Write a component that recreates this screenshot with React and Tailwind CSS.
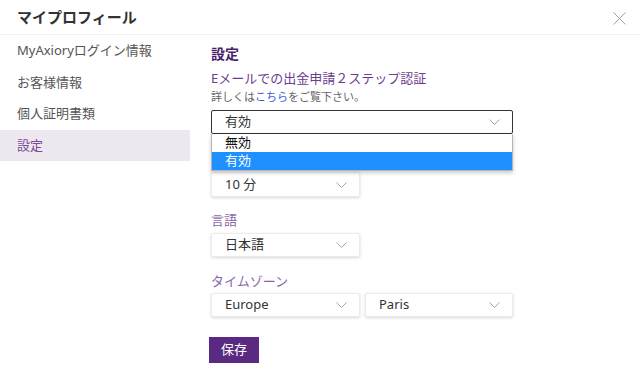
import React from 'react';

function Chevron() {
  return (
    <svg width="11" height="6" viewBox="0 0 11 6" fill="none" className="shrink-0">
      <path d="M0.5 0.5 L5.5 5.5 L10.5 0.5" stroke="#a3a3a3" strokeWidth="1" />
    </svg>
  );
}

function Select({ value, className = '' }) {
  return (
    <div className={`h-[24px] flex items-center justify-between pl-[13px] pr-[12px] bg-white border border-[#ececec] rounded-[2px] shadow-[0_1px_3px_rgba(0,0,0,0.16)] text-[13px] text-[#333] ${className}`}>
      <span>{value}</span>
      <Chevron />
    </div>
  );
}

export default function App() {
  const nav = ['MyAxioryログイン情報', 'お客様情報', '個人証明書類', '設定'];

  return (
    <div className="w-[640px] h-[373px] bg-white overflow-hidden font-['Noto_Sans','Noto_Sans_CJK_JP',sans-serif]">
      {/* Header */}
      <div className="h-[35px] flex items-center justify-between pl-[17px] pr-[14px] border-b border-[#f1f1f1]">
        <h1 className="text-[15px] font-bold text-[#333] leading-none">マイプロフィール</h1>
        <svg width="13" height="13" viewBox="0 0 13 13" className="mt-[3px]">
          <path d="M0.5 0.5 L12.5 12.5 M12.5 0.5 L0.5 12.5" stroke="#a0a0a0" strokeWidth="1" />
        </svg>
      </div>

      <div className="flex">
        {/* Sidebar */}
        <aside className="w-[190px] shrink-0">
          {nav.map((item) => (
            <div
              key={item}
              className={`h-[31.5px] flex items-center pl-[17px] text-[13px] ${item === '設定' ? 'bg-[#ede7f0] text-[#7a4b96]' : 'text-[#555]'}`}
            >
              {item}
            </div>
          ))}
        </aside>

        {/* Main */}
        <main className="flex-1 pl-[21px] pt-[9px]">
          <h2 className="text-[14px] leading-[20px] font-bold text-[#4a1d6b]">設定</h2>
          <div className="mt-[5px] text-[13px] leading-[18px] text-[#6a3d8f]">Eメールでの出金申請２ステップ認証</div>
          <div className="mt-[2px] text-[11px] leading-[15px] text-[#666]">
            詳しくは<span className="text-[#3b5bdb]">こちら</span>をご覧下さい。
          </div>

          <div className="relative mt-[6px] w-[302px]">
            <div className="h-[24px] flex items-center justify-between pl-[13px] pr-[12px] bg-white border border-[#333] rounded-[2px] text-[13px] text-[#333]">
              <span>有効</span>
              <Chevron />
            </div>
            <div className="absolute left-0 top-full w-full z-10 bg-white border border-[#b5b5b5] border-t-0 shadow-[0_2px_4px_rgba(0,0,0,0.2)] text-[13px]">
              <div className="h-[18px] flex items-center pl-[13px] text-[#111]">無効</div>
              <div className="h-[18px] flex items-center pl-[13px] bg-[#1e90ff] text-white">有効</div>
            </div>
          </div>

          {/* label hidden under the open dropdown */}
          <div className="mt-[16px] h-[18px]" />
          <Select value="10 分" className="mt-[4px] w-[149px] h-[25px]" />

          <div className="mt-[14px] text-[13px] leading-[18px] text-[#8c68a8]">言語</div>
          <Select value="日本語" className="mt-[4px] w-[149px]" />

          <div className="mt-[15px] text-[13px] leading-[18px] text-[#8c68a8]">タイムゾーン</div>
          <div className="mt-[3px] flex gap-[5px]">
            <Select value="Europe" className="w-[149px]" />
            <Select value="Paris" className="w-[148px]" />
          </div>

          <button className="mt-[20px] -ml-[2px] w-[50px] h-[26px] bg-[#5a2a82] text-white text-[13px] flex items-center justify-center">
            保存
          </button>
        </main>
      </div>
    </div>
  );
}
